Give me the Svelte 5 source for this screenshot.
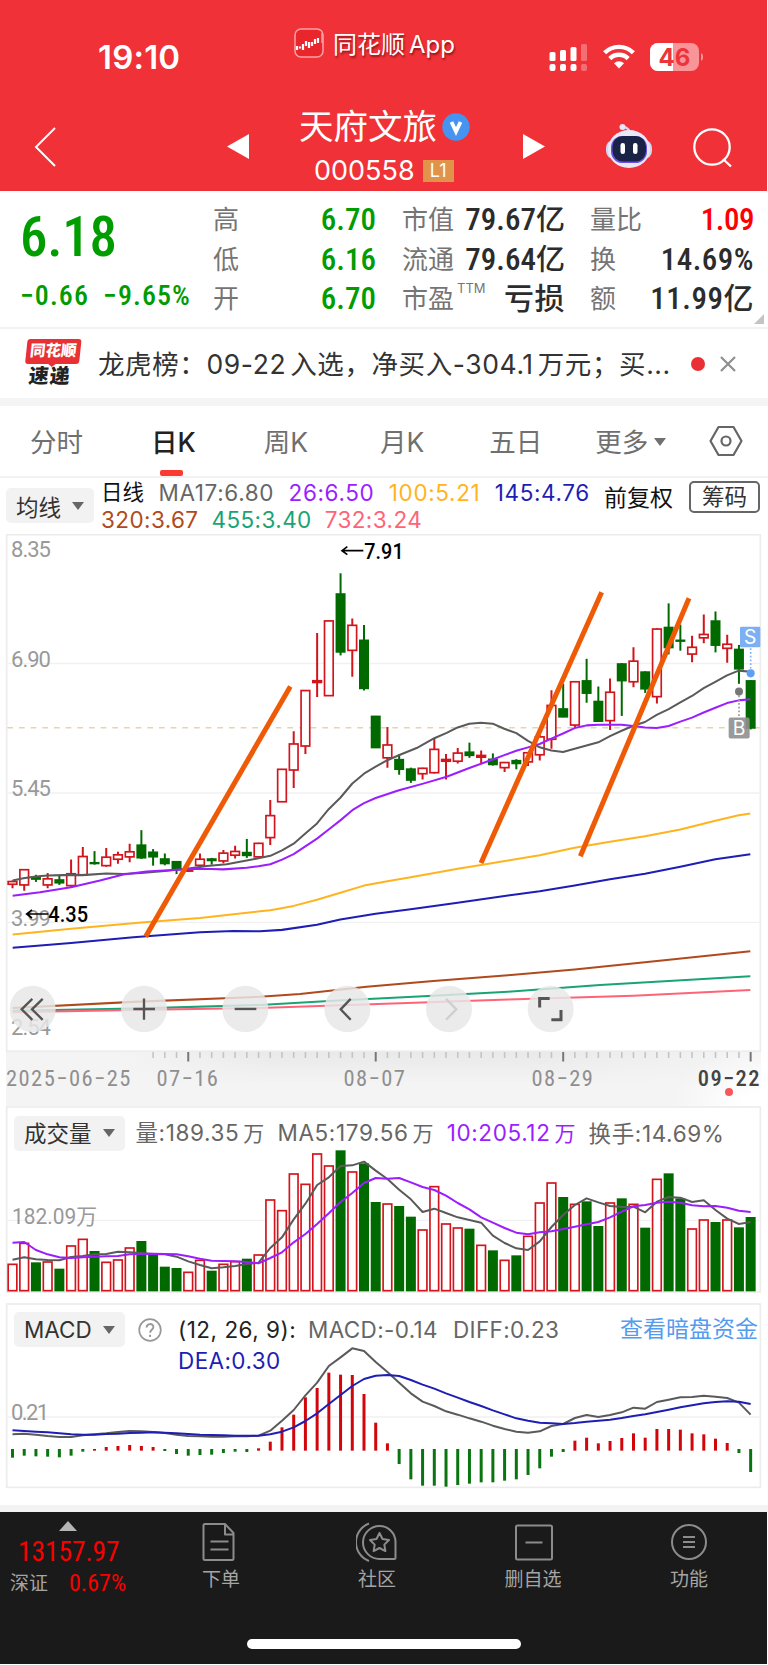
<script lang="ts">
  type Candle = [string, number, number, number, number];

  // chart units: 3 per css pixel
  const STEP = 35.15;
  const cx = (i: number) => 37.5 + STEP * i;

  // direction, high, body top, body bottom, low
  const candles: Candle[] = [
    ['r', 1037, 1040, 1048, 1060], ['r', 1003, 1005, 1050, 1067], ['g', 1020, 1026, 1034, 1041],
    ['r', 1015, 1032, 1050, 1060], ['g', 1022, 1034, 1045, 1050], ['r', 975, 1017, 1052, 1057],
    ['r', 938, 966, 1020, 1022], ['g', 950, 983, 988, 990], ['r', 941, 968, 993, 996],
    ['r', 952, 961, 974, 987], ['r', 928, 952, 967, 983], ['g', 888, 931, 971, 973],
    ['g', 944, 952, 968, 993], ['g', 957, 972, 988, 992], ['g', 980, 980, 1005, 1018],
    ['r', 1003, 1005, 1009, 1012], ['r', 957, 974, 992, 1000], ['g', 970, 972, 979, 990],
    ['r', 947, 956, 979, 986], ['r', 934, 951, 962, 972], ['g', 914, 953, 964, 970],
    ['r', 925, 927, 967, 968], ['r', 799, 845, 910, 932], ['r', 708, 708, 804, 804],
    ['r', 595, 633, 710, 763], ['r', 474, 475, 639, 663], ['r', 305, 446, 451, 494],
    ['r', 268, 269, 490, 490], ['g', 128, 188, 362, 371], ['r', 262, 282, 356, 434],
    ['g', 281, 325, 470, 475], ['g', 550, 550, 645, 645], ['r', 583, 636, 674, 703],
    ['g', 663, 678, 709, 724], ['g', 703, 706, 741, 748], ['r', 703, 705, 721, 738],
    ['r', 616, 649, 718, 720], ['r', 663, 679, 684, 738], ['r', 645, 660, 684, 691],
    ['g', 629, 656, 668, 674], ['r', 652, 667, 672, 693], ['g', 661, 677, 695, 697],
    ['r', 686, 688, 703, 716], ['g', 678, 681, 692, 708], ['r', 657, 659, 686, 698],
    ['r', 605, 612, 665, 682], ['r', 474, 519, 619, 647], ['g', 455, 528, 554, 554],
    ['r', 447, 449, 577, 585], ['g', 381, 445, 484, 511], ['g', 463, 506, 567, 568],
    ['r', 439, 480, 564, 592], ['g', 394, 395, 447, 550], ['r', 347, 388, 449, 465],
    ['g', 418, 419, 471, 482], ['r', 291, 293, 493, 513], ['g', 217, 287, 349, 368],
    ['g', 280, 325, 330, 357], ['r', 313, 347, 367, 391], ['r', 250, 309, 319, 335],
    ['g', 241, 268, 342, 362], ['r', 310, 338, 350, 393], ['g', 340, 352, 412, 455],
    ['g', 444, 445, 587, 590],
  ];

  const averages = [
    { color: '#b04a1c', points: '38,1414 400,1396 780,1381 900,1373 1100,1351 1300,1334 1524,1317 1724,1300 2000,1272 2251,1246' },
    { color: '#18a474', points: '38,1422 400,1416 780,1405 1000,1393 1300,1378 1524,1366 1800,1346 2251,1320' },
    { color: '#ff6378', points: '38,1427 400,1420 780,1414 1200,1400 1524,1389 1900,1378 2251,1361' },
    { color: '#ffb41f', points: '38,1197 213,1180 424,1161 600,1148 780,1128 811,1125 881,1112 951,1094 1021,1073 1092,1052 1162,1039 1232,1027 1303,1015 1373,1002 1443,991 1524,978 1619,962 1724,940 1830,922 1935,906 2041,886 2146,860 2216,844 2251,839' },
    { color: '#1e1eb4', points: '38,1236 213,1222 400,1205 600,1190 700,1186 780,1187 846,1183 951,1168 1021,1152 1127,1135 1232,1122 1373,1103 1524,1081 1619,1069 1724,1052 1830,1033 1935,1017 2041,996 2146,974 2251,959' },
    { color: '#5a5a5a', points: '38,1037 70,1030 107,1025 143,1022 190,1021 248,1021 319,1016 370,1018 424,1015 494,1009 560,1002 620,994 680,989 740,978 775,971 811,964 846,948 881,928 916,898 951,868 986,826 1021,792 1057,750 1092,721 1127,700 1162,681 1200,665 1250,645 1303,616 1340,600 1373,584 1408,573 1443,570 1478,573 1513,588 1549,601 1584,624 1619,643 1654,652 1689,657 1724,647 1795,628 1830,610 1865,594 1900,579 1935,568 1970,547 2006,530 2041,510 2076,491 2111,468 2146,449 2181,430 2216,416 2251,419' },
    { color: '#9b1eff', points: '38,1082 120,1072 213,1057 300,1037 370,1019 440,1010 530,1005 600,1002 635,1003 670,1004 740,999 775,995 811,989 846,975 881,959 916,936 951,913 986,886 1021,859 1057,829 1092,808 1127,793 1197,770 1267,751 1340,730 1408,704 1478,679 1513,666 1549,653 1584,643 1619,633 1654,617 1689,602 1724,586 1760,578 1795,576 1865,576 1900,580 1935,584 1970,586 2006,580 2041,567 2076,555 2111,540 2146,526 2181,512 2216,504 2251,501' },
  ];

  const volumes = [
    491, 428, 487, 484, 506, 436, 416, 453, 485, 478, 442, 423, 462, 500, 504, 515,
    479, 512, 491, 483, 476, 463, 298, 330, 220, 251, 160, 196, 151, 214, 190, 306,
    310, 318, 350, 388, 258, 370, 382, 386, 434, 451, 479, 466, 407, 307, 247, 291,
    311, 304, 378, 307, 295, 311, 383, 236, 220, 295, 385, 358, 366, 358, 382, 351,
  ];
  const volumeMa5 = [
    479, 472, 478, 480, 481, 471, 468, 463, 462, 455, 457, 459, 462, 463, 470, 484,
    495, 505, 502, 498, 492, 488, 444, 412, 358, 311, 255, 232, 198, 196, 185, 212,
    237, 269, 298, 336, 326, 339, 352, 360, 368, 407, 429, 445, 450, 424, 381, 345,
    315, 295, 307, 318, 321, 320, 337, 305, 291, 293, 306, 301, 330, 356, 372, 366,
  ];
  const volumeMa10 = [
    428, 426, 450, 463, 472, 474, 472, 470, 469, 468, 463, 462, 461, 462, 463, 469,
    476, 482, 483, 484, 486, 490, 474, 457, 427, 402, 372, 340, 306, 279, 249, 234,
    236, 234, 247, 261, 270, 287, 309, 328, 352, 368, 384, 398, 403, 397, 394, 387,
    380, 373, 366, 352, 335, 319, 315, 308, 305, 308, 316, 319, 318, 323, 332, 336,
  ];

  const ZERO = 479;
  const macd = [
    503, 497, 499, 500, 502, 497, 485, 477, 471, 468, 465, 468, 471, 483, 492, 497,
    495, 494, 489, 485, 486, 475, 455, 412, 374, 322, 294, 248, 254, 255, 312, 398,
    460, 522, 568, 587, 587, 590, 585, 581, 577, 577, 572, 568, 555, 535, 500, 486,
    452, 443, 460, 453, 444, 430, 443, 417, 417, 419, 430, 433, 446, 459, 489, 546,
  ];
  const diff = [
    433, 431, 434, 438, 441, 441, 436, 433, 430, 426, 423, 424, 426, 429, 434, 438,
    439, 440, 440, 439, 439, 437, 422, 392, 360, 316, 278, 228, 202, 175, 183, 216,
    246, 278, 310, 335, 348, 364, 374, 385, 395, 407, 417, 425, 428, 424, 408, 402,
    384, 375, 381, 375, 367, 353, 356, 336, 329, 322, 321, 317, 320, 324, 338, 374,
  ];
  const dea = [
    421, 423, 425, 427, 430, 433, 434, 434, 432, 431, 429, 428, 427, 428, 430, 432,
    434, 435, 436, 437, 437, 437, 433, 425, 412, 393, 370, 342, 315, 288, 267, 257,
    255, 258, 270, 284, 296, 310, 323, 336, 348, 361, 373, 385, 392, 398, 400, 402,
    399, 395, 392, 389, 384, 378, 373, 366, 359, 352, 346, 340, 336, 334, 335, 342,
  ];

  const line = (values: number[]) => values.map((v, i) => `${cx(i).toFixed(1)},${v}`).join(' ');

  const priceLabels = [
    { text: '8.35', y: 79 },
    { text: '6.90', y: 404 },
    { text: '5.45', y: 788 },
    { text: '3.99', y: 1171 },
    { text: '2.54', y: 1495 },
  ];
  const ticks = Array.from({ length: 52 }, (_, i) => i + 12);
</script>

{#snippet caret()}
  <svg class="caret" width="12" height="8" viewBox="0 0 12 8"><path d="M0 0h12L6 8z" fill="currentColor" /></svg>
{/snippet}

<div class="app">
  <header>
    <div class="status">
      <span class="time">19:10</span>
      <div class="watermark">
        <svg width="30" height="30" viewBox="0 0 30 30">
          <rect x="1" y="1" width="28" height="28" rx="6" fill="#e8262c" stroke="#f7a3a5" stroke-width="1.5" />
          <path d="M3 18v4M6 18.500v2M9 16v6M12 13v5M15 14v6M18 14v4M21 11v5M24 10v5" stroke="#fff" stroke-width="2.200" />
          <path d="M28 5v10" stroke="#f7a3a5" stroke-width="1.500" />
        </svg>
        <span>同花顺<i>App</i></span>
      </div>
      <svg class="signal" width="40" height="28" viewBox="0 0 40 28" fill="#fff">
        <rect x="0.5" y="8" width="6" height="9" rx="1.5" />
        <rect x="11" y="6" width="6" height="11" rx="1.5" />
        <rect x="21.5" y="3" width="6" height="14" rx="1.5" />
        <rect x="32" y="0" width="6" height="17" rx="1.5" opacity=".3" />
        <rect x="0.5" y="20" width="6" height="7" rx="2" />
        <rect x="11" y="20" width="6" height="7" rx="2" />
        <rect x="21.5" y="20" width="6" height="7" rx="2" />
        <rect x="32" y="20" width="6" height="7" rx="2" opacity=".3" />
      </svg>
      <svg class="wifi" width="32" height="25" viewBox="0 0 32 25" fill="none" stroke="#fff" stroke-width="4.4">
        <path d="M1.6 8.8a20.5 20.5 0 0 1 28.8 0" />
        <path d="M6.8 14.6a13 13 0 0 1 18.4 0" />
        <path d="M16 24.5l-5-5.3a7.2 7.2 0 0 1 10 0z" fill="#fff" stroke="none" />
      </svg>
      <svg class="battery" width="53" height="28" viewBox="0 0 53 28">
        <defs><clipPath id="cell"><rect width="49" height="28" rx="8" /></clipPath></defs>
        <g clip-path="url(#cell)">
          <rect width="49" height="28" fill="#f99599" />
          <rect width="23" height="28" fill="#fff" />
        </g>
        <path d="M51 10c3 1.500 3 6.500 0 8z" fill="#f99599" />
        <text x="24.500" y="22.500" text-anchor="middle" font-family="Inter" font-weight="700" font-size="24" fill="#ee343b">46</text>
      </svg>
    </div>

    <div class="nav">
      <svg class="back" width="24" height="40" viewBox="0 0 24 40" fill="none" stroke="#fff" stroke-width="2">
        <path d="M22 1L3 20l19 19" />
      </svg>
      <svg class="prev" width="22" height="25" viewBox="0 0 22 25"><path d="M22 0v25L0 12.500z" fill="#fff" /></svg>
      <div class="title">
        <div class="name">
          <span>天府文旅</span>
          <svg width="28" height="28" viewBox="0 0 28 28">
            <circle cx="14" cy="14" r="13.700" fill="#4694f2" />
            <path d="M9.500 9l4.500 9.500L18.500 9" fill="none" stroke="#fff" stroke-width="3.800" />
          </svg>
        </div>
        <div class="code"><span>000558</span><b>L1</b></div>
      </div>
      <svg class="next" width="22" height="25" viewBox="0 0 22 25"><path d="M0 0v25l22-12.500z" fill="#fff" /></svg>
      <svg class="robot" width="48" height="46" viewBox="0 0 48 46">
        <path d="M16.500 5c3-2 7 0 8 4" fill="none" stroke="#dcd6f5" stroke-width="2.500" />
        <circle cx="17.500" cy="4" r="3" fill="#e9e6fa" />
        <rect x="1" y="17" width="46" height="19" rx="8" fill="#d5d3f0" />
        <ellipse cx="24" cy="26" rx="21" ry="19" fill="#e8e9f8" />
        <rect x="6" y="13" width="36" height="27" rx="11.500" fill="#6a4fe0" />
        <rect x="7.500" y="13" width="33.500" height="25.500" rx="10.500" fill="#1a2345" />
        <rect x="15.500" y="20" width="4.500" height="11" rx="2.200" fill="#fff" />
        <rect x="28" y="20" width="4.500" height="11" rx="2.200" fill="#fff" />
      </svg>
      <svg class="search" width="40" height="40" viewBox="0 0 40 40" fill="none" stroke="#fff" stroke-width="2.300">
        <circle cx="19" cy="19" r="17.700" />
        <path d="M30 31l8 7.500" />
      </svg>
    </div>
  </header>

  <section class="quote">
    <div class="last">
      <span class="din price">6.18</span>
      <div class="din change"><span>−0.66</span><span>−9.65%</span></div>
    </div>
    <div class="stats">
      <span>高</span><b class="din down">6.70</b><span>市值</span><b class="din">79.67<em>亿</em></b><span>量比</span><b class="din up">1.09</b>
      <span>低</span><b class="din down">6.16</b><span>流通</span><b class="din">79.64<em>亿</em></b><span>换</span><b class="din wide">14.69%</b>
      <span>开</span><b class="din down">6.70</b><span>市盈<sup>TTM</sup></span><b class="din wide"><em>亏损</em></b><span>额</span><b class="din wide">11.99<em>亿</em></b>
    </div>
    <svg class="corner" width="10" height="10" viewBox="0 0 10 10"><path d="M10 0v10H0z" fill="#c4c4c4" /></svg>
  </section>

  <section class="news">
    <div class="news-logo">
      <span class="bubble">同花顺</span>
      <span class="express">速递</span>
    </div>
    <span class="headline">龙虎榜：<i>09-22</i>入选，净买入<i>-304.1</i>万元；买...</span>
    <span class="dot"></span>
    <svg width="16" height="16" viewBox="0 0 16 16" stroke="#8f8f8f" stroke-width="2.200"><path d="M1 1l14 14M15 1L1 15" /></svg>
  </section>

  <nav class="tabs">
    <span>分时</span>
    <span class="active">日K</span>
    <span>周K</span>
    <span>月K</span>
    <span>五日</span>
    <span>更多{@render caret()}</span>
    <svg width="34" height="32" viewBox="0 0 34 32" fill="none" stroke="#666" stroke-width="2.200">
      <path d="M9.500 2h15l8 14-8 14h-15l-8-14z" stroke-linejoin="round" />
      <circle cx="17" cy="16" r="4.500" />
    </svg>
  </nav>

  <section class="ma">
    <button class="picker">均线{@render caret()}</button>
    <div class="ma-values">
      <div>
        <b>日线</b><span class="c17">MA17:6.80</span><span class="c26">26:6.50</span><span class="c100">100:5.21</span><span class="c145">145:4.76</span>
      </div>
      <div class="long">
        <span class="c320">320:3.67</span><span class="c455">455:3.40</span><span class="c732">732:3.24</span>
      </div>
    </div>
    <span class="adjust">前复权</span>
    <button class="chips">筹码</button>
  </section>

  <svg class="kline" width="768" height="518" viewBox="0 11.8 2304 1532.500" preserveAspectRatio="none">
    <rect x="20" y="14" width="2261" height="1528" fill="#fff" stroke="#ececec" stroke-width="5" />
    <path d="M22 395H2279M22 778H2279M22 1161H2279" stroke="#f1f1f1" stroke-width="4" />
    <path d="M22 585H2279" stroke="#e8d3ae" stroke-width="4" stroke-dasharray="17 18" />
    {#each averages.slice(0, 3) as ma}
      <polyline points={ma.points} fill="none" stroke={ma.color} stroke-width="6" />
    {/each}
    {#each priceLabels as label}
      <text class="axis" x="33" y={label.y} textLength="120">{label.text}</text>
    {/each}
    {#each candles as [dir, high, top, bottom, low], i}
      {#if dir === 'g'}
        <path d="M{cx(i)} {high}V{low}" stroke="#006a00" stroke-width="6" />
        <rect x={cx(i) - 15} y={top - 1} width="30" height={bottom - top + 2} fill="#006a00" />
      {:else}
        <path d="M{cx(i)} {high}V{top}M{cx(i)} {bottom}V{low}" stroke="#d2141c" stroke-width="6" />
        <rect x={cx(i) - 13} y={top} width="26" height={bottom - top} fill="#fff" stroke="#d2141c" stroke-width="5" />
      {/if}
    {/each}
    {#each averages.slice(3) as ma}
      <polyline points={ma.points} fill="none" stroke={ma.color} stroke-width="6" stroke-linejoin="round" />
    {/each}

    <g stroke="#999" stroke-width="5" stroke-dasharray="5 6">
      <path d="M2217 490V555" />
      <path d="M2252 350V415" stroke="#7fb2f4" />
    </g>
    <circle cx="2217" cy="478" r="12" fill="#777" />
    <circle cx="2252" cy="424" r="12" fill="#5d9ff2" />
    <rect x="2186" y="555" width="63" height="62" rx="6" fill="#8f8f8f" opacity=".9" />
    <rect x="2220" y="286" width="61" height="61" rx="4" fill="#7db0f3" />
    <text class="mark" x="2217" y="607">B</text>
    <text class="mark" x="2251" y="337">S</text>

    <g fill="none" stroke="#000" stroke-width="5">
      <path d="M1090 61H1026M1042 49L1026 61L1042 73" />
      <path d="M145 1136H80M96 1124L80 1136L96 1148" />
    </g>
    <text class="peak" x="1093" y="87" textLength="118" lengthAdjust="spacingAndGlyphs">7.91</text>
    <text class="peak" x="145" y="1161" textLength="119" lengthAdjust="spacingAndGlyphs">4.35</text>

    <g stroke="#ee5a06" stroke-width="15">
      <path d="M437 1203L871 463" />
      <path d="M1443 985L1805 184" />
      <path d="M1741 965L2067 202" />
    </g>

    <g fill="#e8e8e8" opacity=".84">
      {#each [98, 432, 736, 1042, 1347, 1652] as x}
        <circle cx={x} cy="1417" r="69" />
      {/each}
    </g>
    <g fill="none" stroke="#555" stroke-width="7">
      <path d="M97 1387L65 1418L97 1449M128 1387L96 1418L128 1449" />
      <path d="M400 1417H465M432 1386V1449" />
      <path d="M704 1417H769" />
      <path d="M1052 1387L1022 1418L1052 1449" />
      <path d="M1338 1387L1369 1418L1338 1449" stroke="#cfcfcf" />
      <path d="M1619 1413V1386H1649M1683 1420V1449H1654" stroke-width="9" />
    </g>
  </svg>

  <div class="ruler">
    <svg width="755" height="10" viewBox="6 0 755 10">
      {#each ticks as i}
        {@const major = (i + 1) % 16 === 0}
        <path d="M{cx(i) / 3} 0V{major ? 9.5 : 6}" stroke={major ? '#777' : '#c4c4c4'} stroke-width={major ? 2 : 1.6} />
      {/each}
    </svg>
    <div class="dates din"><span>2025−06−25</span><span>07−16</span><span>08−07</span><span>08−29</span><b>09−22</b></div>
    <span class="today"></span>
  </div>

  <section class="panel">
    <svg class="plot" width="768" height="188" viewBox="0 18 2304 564">
      <rect x="20" y="21" width="2261" height="555" fill="#fff" stroke="#ececec" stroke-width="5" />
      <path d="M22 361H2279" stroke="#f1f1f1" stroke-width="4" />
      <text class="axis" x="36" y="373" textLength="255" lengthAdjust="spacingAndGlyphs">182.09万</text>
      {#each volumes as top, i}
        {#if candles[i][0] === 'g'}
          <rect x={cx(i) - 15} y={top} width="30" height={574 - top} fill="#006a00" />
        {:else}
          <rect x={cx(i) - 13} y={top + 2} width="26" height={570 - top} fill="#fff" stroke="#d2141c" stroke-width="5" />
        {/if}
      {/each}
      <polyline points={line(volumeMa5)} fill="none" stroke="#5a5a5a" stroke-width="6" stroke-linejoin="round" />
      <polyline points={line(volumeMa10)} fill="none" stroke="#9b1eff" stroke-width="6" stroke-linejoin="round" />
    </svg>
    <div class="legend volume">
      <button class="picker">成交量{@render caret()}</button>
      <span>量:189.35<i>万</i></span>
      <span>MA5:179.56<i>万</i></span>
      <span class="c26">10:205.12<i>万</i></span>
      <span>换手:14.69%</span>
    </div>
  </section>

  <section class="panel macd">
    <svg class="plot" width="768" height="186" viewBox="0 39 2304 558">
      <rect x="20" y="42" width="2261" height="550" fill="#fff" stroke="#ececec" stroke-width="5" />
      <path d="M22 381H2279" stroke="#f1f1f1" stroke-width="4" />
      <text class="axis" x="33" y="390" textLength="114">0.21</text>
      {#each macd as v, i}
        <path d="M{cx(i)} {v > ZERO ? ZERO - 2 : ZERO + 3}V{v}" stroke={v > ZERO ? '#0a7410' : '#d2060a'} stroke-width="9" />
      {/each}
      <polyline points={line(diff)} fill="none" stroke="#5a5a5a" stroke-width="6" stroke-linejoin="round" />
      <polyline points={line(dea)} fill="none" stroke="#1e1eb4" stroke-width="6" stroke-linejoin="round" />
    </svg>
    <div class="legend">
      <button class="picker">MACD{@render caret()}</button>
      <svg class="help" width="24" height="24" viewBox="0 0 24 24" fill="none" stroke="#999">
        <circle cx="12" cy="12" r="10.800" stroke-width="1.700" />
        <path d="M8.600 9.500c0-4.500 6.800-4.500 6.800-.4 0 2.700-3.300 2.700-3.300 5.700M12.100 16.800v2.200" stroke-width="1.900" />
      </svg>
      <span class="params">(12, 26, 9):</span>
      <span>MACD:-0.14</span>
      <span>DIFF:0.23</span>
      <a href="#fund">查看暗盘资金</a>
    </div>
    <div class="dea c145">DEA:0.30</div>
  </section>

  <footer>
    <div class="index">
      <svg width="18" height="10" viewBox="0 0 18 10"><path d="M9 0l9 10H0z" fill="#b5b5b5" /></svg>
      <b class="din">13157.97</b>
      <div><span>深证</span><b class="din">0.67%</b></div>
    </div>
    <div class="item">
      <svg width="42" height="40" viewBox="0 0 42 40">
        <path d="M5 2h20l8.500 9v25.500q0 1.500-1.500 1.500h-27q-1.500 0-1.500-1.500v-33Q3.500 2 5 2zM25 2v10.500h8.500M10.500 19.500h18M10.500 27.500h18" />
      </svg>
      <span>下单</span>
    </div>
    <div class="item">
      <svg width="42" height="40" viewBox="0 0 42 40">
        <path d="M23.500 4a16 16 0 0 1 16 16v16q0 1-1 1h-15a16.500 16.500 0 0 1 0-33zM13 1.500a20 20 0 0 0 0 37.500" />
        <path d="M23.500 11l3 6 6.500 1-4.700 4.600 1.100 6.500-5.900-3.100-5.900 3.100 1.100-6.500L14 18l6.500-1z" />
      </svg>
      <span>社区</span>
    </div>
    <div class="item">
      <svg width="42" height="40" viewBox="0 0 42 40">
        <rect x="4" y="3.500" width="36" height="34" rx="1.500" />
        <path d="M13.500 20.500h17" />
      </svg>
      <span>删自选</span>
    </div>
    <div class="item">
      <svg width="42" height="40" viewBox="0 0 42 40">
        <circle cx="21" cy="20" r="17" />
        <path d="M15 15h12M15 20h12M15 25h12" />
      </svg>
      <span>功能</span>
    </div>
    <div class="home"></div>
  </footer>
</div>

<style>
  :global(body) {
    background: #fff;
  }

  .app {
    width: 768px;
    height: 1665px;
    overflow: hidden;
    font-family: Inter, "Noto Sans CJK SC", sans-serif;
    background: #fff;
    color: #333;
  }

  svg {
    display: block;
    flex-shrink: 0;
  }

  i,
  em {
    font-style: normal;
  }

  button {
    border: none;
    padding: 0;
    font: inherit;
    color: inherit;
  }

  .din {
    font-family: Roboto, "Noto Sans CJK SC", sans-serif;
    font-stretch: 87%;
  }

  header {
    height: 191px;
    width: 767px;
    background: #f03137;
    color: #fff;
  }

  .status {
    display: flex;
    height: 100px;
  }

  .time {
    width: 195px;
    padding: 37px 0 0 98px;
    box-sizing: border-box;
    font-size: 33px;
    font-weight: 600;
    line-height: 40px;
    letter-spacing: 0.2px;
  }

  .watermark {
    display: flex;
    width: 255px;
    margin: 28px 0 0 99px;
    height: 32px;
    gap: 9px;
    line-height: 33px;
    font-size: 24px;
    text-shadow: 1px 2px 2px rgba(90, 0, 0, 0.6);
  }

  .watermark i {
    margin-left: 4px;
  }

  .signal {
    margin: 44px 0 0 0;
  }

  .wifi {
    margin: 44px 0 0 14px;
  }

  .battery {
    margin: 43px 0 0 15px;
  }

  .nav {
    display: flex;
    height: 91px;
  }

  .back {
    margin: 27px 0 0 33px;
  }

  .prev {
    margin: 34px 0 0 170px;
  }

  .title {
    width: 172px;
    margin-left: 50px;
  }

  .name {
    display: flex;
    height: 54px;
    align-items: center;
    gap: 5px;
    font-size: 34.5px;
    line-height: 54px;
  }

  .code {
    display: flex;
    align-items: center;
    gap: 8px;
    height: 30px;
    padding-left: 15px;
    margin-top: 2px;
    font-size: 27px;
    line-height: 30px;
  }

  .code b {
    width: 31px;
    height: 22px;
    background: #e1934a;
    font-size: 18px;
    font-weight: 400;
    line-height: 22px;
    text-align: center;
  }

  .next {
    margin: 34px 0 0 52px;
  }

  .robot {
    margin: 23px 0 0 60px;
  }

  .search {
    margin: 28px 0 0 40px;
  }

  .quote {
    position: relative;
    display: flex;
    height: 136px;
    border-bottom: 2px solid #f2f2f2;
  }

  .last {
    width: 213px;
    padding: 14px 0 0 20px;
    box-sizing: border-box;
    color: #009c00;
    font-weight: 500;
  }

  .price {
    display: block;
    height: 64px;
    font-size: 55px;
    line-height: 64px;
    letter-spacing: -0.3px;
  }

  .change {
    display: flex;
    gap: 14px;
    margin-top: 10px;
    font-size: 28px;
    line-height: 34px;
    letter-spacing: 1.1px;
  }

  .stats {
    display: grid;
    grid-template-columns: 26px 137px 28px 161px 26px 163px;
    grid-template-rows: repeat(3, 39.5px);
    padding-top: 9px;
    line-height: 40px;
    font-size: 26px;
    color: #757575;
    white-space: nowrap;
  }

  .stats span:nth-of-type(3n + 2) {
    margin-left: 26px;
  }

  .stats span:nth-of-type(3n) {
    margin-left: 25px;
  }

  .stats b {
    justify-self: end;
    font-size: 31px;
    font-weight: 500;
    color: #2c2c2c;
  }

  .stats em {
    font-size: 29px;
  }

  .stats .wide {
    letter-spacing: 0.5px;
  }

  .stats .wide em {
    font-size: 30px;
  }

  .stats .down {
    color: #009c00;
  }

  .stats .up {
    color: #ff0000;
    letter-spacing: -0.5px;
  }

  sup {
    margin-left: 3px;
    font-size: 13px;
    line-height: 0;
    vertical-align: 15px;
  }

  .corner {
    position: absolute;
    right: 4px;
    bottom: 3px;
  }

  .news {
    display: flex;
    align-items: center;
    height: 69px;
    border-bottom: 8px solid #f4f4f4;
  }

  .news-logo {
    display: flex;
    flex-direction: column;
    align-items: center;
    width: 56px;
    margin-left: 24px;
    font-weight: 900;
    transform: skewX(-6deg);
  }

  .bubble {
    position: relative;
    width: 54px;
    height: 25px;
    border-radius: 3px;
    background: #e93034;
    color: #fff;
    font-size: 15.5px;
    line-height: 24px;
    text-align: center;
  }

  .bubble::after {
    content: "";
    position: absolute;
    left: 22px;
    top: 24px;
    border: 5px solid transparent;
    border-top: 4px solid #e93034;
    border-bottom: none;
  }

  .express {
    margin-right: 2px;
    font-size: 20px;
    line-height: 25px;
    letter-spacing: 1px;
    color: #222;
  }

  .headline {
    width: 575px;
    margin-left: 18px;
    font-size: 26.5px;
    line-height: 40px;
    letter-spacing: 0.6px;
    white-space: nowrap;
  }

  .headline i {
    margin-right: 4px;
  }

  .dot {
    width: 14px;
    height: 14px;
    margin: 0 15px 0 18px;
    border-radius: 50%;
    background: #e93034;
  }

  .tabs {
    display: flex;
    height: 72px;
    border-bottom: 2px solid #f2f2f2;
    box-sizing: border-box;
    font-size: 26.5px;
    line-height: 73px;
    color: #707070;
  }

  .tabs span {
    position: relative;
    display: flex;
    align-items: center;
    gap: 6px;
    height: 72px;
    margin-left: 68px;
  }

  .tabs span:first-child {
    margin-left: 30px;
  }

  .tabs span:nth-child(4) {
    margin-left: 72px;
  }

  .tabs span:nth-child(5) {
    margin-left: 65px;
  }

  .tabs span:nth-child(6) {
    margin-left: 53px;
  }

  .tabs .active {
    font-weight: 500;
    color: #222;
  }

  .tabs .active::after {
    content: "";
    position: absolute;
    left: 9px;
    bottom: 2px;
    width: 23px;
    height: 6px;
    border-radius: 2px;
    background: #fb3a30;
  }

  .tabs > svg {
    margin: 19px 0 0 43px;
  }

  .ma {
    display: flex;
    height: 56px;
    font-size: 22.5px;
  }

  .picker {
    display: flex;
    align-items: center;
    justify-content: space-between;
    height: 35px;
    padding: 0 10px;
    border-radius: 5px;
    background: #f2f2f2;
    font-size: 22.5px;
    color: #333;
  }

  .picker .caret {
    color: #666;
  }

  .ma .picker {
    width: 88px;
    margin: 10px 0 0 6px;
  }

  .ma-values {
    width: 503px;
    margin: 1px 0 0 7px;
    letter-spacing: 0.62px;
  }

  .ma-values div {
    display: flex;
    gap: 14.5px;
    height: 27px;
    line-height: 27px;
  }

  .ma-values .long {
    gap: 13px;
    letter-spacing: 0.4px;
  }

  .ma-values b {
    font-size: 21.5px;
    font-weight: 400;
    letter-spacing: 0;
    color: #111;
  }

  .c17 {
    color: #666;
  }

  .c26 {
    color: #9b1eff;
  }

  .c100 {
    color: #ffb41f;
  }

  .c145 {
    color: #1e1eb4;
  }

  .c320 {
    color: #b04a1c;
  }

  .c455 {
    color: #18a474;
  }

  .c732 {
    color: #ff6378;
  }

  .adjust {
    width: 85px;
    font-size: 23px;
    line-height: 40px;
    color: #111;
  }

  .chips {
    box-sizing: border-box;
    width: 71px;
    height: 32px;
    margin-top: 3px;
    border: 2px solid #666;
    border-radius: 5px;
    background: #fff;
    font-size: 22.5px;
    line-height: 26px;
  }

  .axis {
    font-family: Roboto, "Noto Sans CJK SC", sans-serif;
    font-size: 66px;
    fill: #999;
  }

  .mark {
    font-family: Inter, sans-serif;
    font-size: 58px;
    text-anchor: middle;
    fill: #fff;
  }

  .peak {
    font-family: Roboto, sans-serif;
    font-size: 66px;
    font-weight: 500;
  }

  .ruler {
    position: relative;
    height: 54px;
    margin: 0 7px 0 6px;
    background: radial-gradient(ellipse 90px 60px at 100% 100%, #fff 20%, transparent),
      linear-gradient(to right, #f4f4f4 15%, transparent 35% 70%, #f4f4f4),
      linear-gradient(to bottom, #e9e9e9, #f4f4f4 60%);
  }

  .dates {
    display: flex;
    font-size: 22.5px;
    line-height: 32px;
    letter-spacing: 1.45px;
    color: #8f8f8f;
  }

  .dates span:nth-child(1) {
    width: 150.5px;
  }

  .dates span:nth-child(2) {
    width: 187px;
  }

  .dates span:nth-child(3) {
    width: 188px;
  }

  .dates b {
    margin-left: auto;
    font-weight: 500;
    color: #444;
  }

  .today {
    position: absolute;
    left: 719px;
    bottom: 10px;
    width: 8px;
    height: 8px;
    border-radius: 50%;
    background: #f9565a;
  }

  .panel {
    position: relative;
    height: 188px;
  }

  .plot {
    position: absolute;
    inset: 0;
  }

  .legend {
    position: relative;
    display: flex;
    align-items: center;
    padding: 9px 10px 0 14px;
    font-size: 22.5px;
    line-height: 35px;
    letter-spacing: 0.35px;
    color: #666;
    white-space: nowrap;
  }

  .legend .picker {
    width: 111px;
    letter-spacing: 0;
  }

  .volume {
    gap: 12.5px;
    letter-spacing: 0.62px;
  }

  .volume i {
    margin-left: 4px;
    font-size: 21px;
  }

  .volume .picker {
    margin-right: -2px;
  }

  .macd {
    height: 202px;
    margin-top: 9px;
    border-bottom: 7px solid #f3f3f3;
  }

  .help {
    margin: 0 16px 0 13px;
  }

  .params {
    width: 130px;
    letter-spacing: 0.5px;
    color: #222;
  }

  .params + span {
    width: 145px;
  }

  .legend a {
    margin-left: auto;
    font-size: 23px;
    letter-spacing: 0;
    color: #559bee;
    text-decoration: none;
  }

  .dea {
    position: relative;
    margin-left: 178px;
    font-size: 22.5px;
    line-height: 28px;
    letter-spacing: 0.4px;
  }

  footer {
    position: relative;
    display: flex;
    width: 767px;
    height: 152px;
    background: #1a1a1a;
    color: #a5a5a5;
    font-size: 19px;
  }

  .index {
    width: 143px;
    padding-top: 9px;
  }

  .index svg {
    margin-left: 59px;
  }

  .index b {
    font-weight: 450;
    color: #f90000;
  }

  .index > b {
    display: block;
    margin-left: 18px;
    font-size: 27.5px;
    line-height: 41px;
    letter-spacing: -0.1px;
  }

  .index div {
    display: flex;
    gap: 21px;
    padding-left: 10px;
    line-height: 23px;
  }

  .index div b {
    font-size: 24px;
  }

  .item {
    display: flex;
    flex-direction: column;
    align-items: center;
    width: 156px;
    padding-top: 10px;
    line-height: 31px;
  }

  .item svg {
    margin-bottom: 2px;
    fill: none;
    stroke: #8c8c8c;
    stroke-width: 2;
    stroke-linejoin: round;
  }

  .home {
    position: absolute;
    left: 247px;
    bottom: 15px;
    width: 274px;
    height: 10px;
    border-radius: 5px;
    background: #fff;
  }
</style>
